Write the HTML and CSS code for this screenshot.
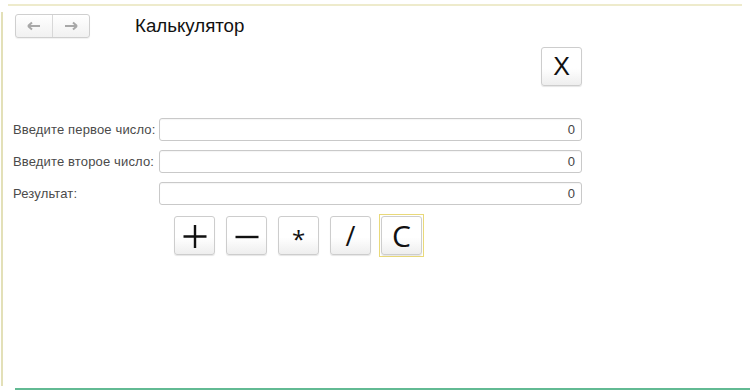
FILE: index.html
```html
<!DOCTYPE html>
<html lang="ru">
<head>
<meta charset="utf-8">
<title>Калькулятор</title>
<link rel="stylesheet" href="styles.css">
</head>
<body>
<div class="page">
  <div class="topline"></div>
  <div class="main">
    <div class="header">
      <div class="nav">
        <button class="nav-btn" type="button" aria-label="Назад">
          <svg width="14" height="10" viewBox="0 0 14 10"><path d="M1 5H13M1 5L5 1.5M1 5L5 8.5" stroke="#a8a8a8" stroke-width="2" fill="none"/></svg>
        </button>
        <button class="nav-btn" type="button" aria-label="Вперёд">
          <svg width="14" height="10" viewBox="0 0 14 10"><path d="M13 5H1M13 5L9 1.5M13 5L9 8.5" stroke="#a8a8a8" stroke-width="2" fill="none"/></svg>
        </button>
      </div>
      <div class="title">Калькулятор</div>
    </div>
    <div class="form">
      <div class="close-row">
        <button class="btn btn-close" type="button">X</button>
      </div>
      <div class="fields">
        <div class="field">
          <label class="label">Введите первое число:</label>
          <div class="input">0</div>
        </div>
        <div class="field">
          <label class="label">Введите второе число:</label>
          <div class="input">0</div>
        </div>
        <div class="field">
          <label class="label">Результат:</label>
          <div class="input">0</div>
        </div>
      </div>
      <div class="ops">
        <button class="btn op" type="button" aria-label="+">
          <svg width="26" height="26" viewBox="0 0 26 26"><path d="M13 2V25M1.5 13.5H24.5" stroke="#111" stroke-width="2.4"/></svg>
        </button>
        <button class="btn op" type="button" aria-label="−">
          <svg width="26" height="26" viewBox="0 0 26 26"><path d="M1.5 14H24.5" stroke="#111" stroke-width="2.4"/></svg>
        </button>
        <button class="btn op op-text op-star" type="button">*</button>
        <button class="btn op op-text" type="button">/</button>
        <div class="focus">
          <button class="btn op op-text op-c" type="button">C</button>
        </div>
      </div>
    </div>
  </div>
  <div class="bottomline"></div>
</div>
</body>
</html>
```

FILE: styles.css
```css
html, body {
  margin: 0;
  padding: 0;
  background: #ffffff;
}

.page {
  width: 750px;
  height: 390px;
  overflow: hidden;
  font-family: "Liberation Sans", Arial, sans-serif;
  color: #333;
}

.topline {
  height: 2px;
  margin: 4px 8px 0 8px;
  background: #eeebcc;
}

.main {
  margin-top: 6px;
  margin-left: 1px;
  height: 374px;
  border-left: 2px solid #e3e0b8;
  box-sizing: border-box;
}

.header {
  display: flex;
  align-items: center;
  padding: 2px 0 0 12px;
  height: 24px;
}

.nav {
  display: flex;
  width: 75px;
  height: 24px;
  border: 1px solid #cfcfcf;
  border-radius: 3px;
  box-sizing: border-box;
  background: linear-gradient(#ffffff, #f1f1f1);
  box-shadow: 0 1px 1px rgba(0,0,0,0.06);
}

.nav-btn {
  flex: 1;
  border: 0;
  background: transparent;
  padding: 0;
  display: flex;
  align-items: center;
  justify-content: center;
}

.nav-btn + .nav-btn {
  border-left: 1px solid #d8d8d8;
}

.title {
  margin-left: 45px;
  font-size: 18.7px;
  color: #111;
  line-height: 20px;
  margin-top: -1px;
}

.form {
  width: 569px;
  padding-left: 10px;
}

.close-row {
  display: flex;
  justify-content: flex-end;
  margin-top: 9px;
}

.btn {
  box-sizing: border-box;
  border: 1px solid #cdcdcd;
  border-radius: 3px;
  background: linear-gradient(#ffffff 0%, #ffffff 55%, #eeeeee 100%);
  box-shadow: 0 1px 1px rgba(0,0,0,0.10);
  padding: 0;
  display: flex;
  align-items: center;
  justify-content: center;
  color: #111;
}

.btn-close {
  width: 41px;
  height: 39px;
  font-family: "Liberation Sans", Arial, sans-serif;
  font-size: 25px;
  line-height: 1;
}

.fields {
  display: flex;
  flex-direction: column;
  gap: 9px;
  margin-top: 32px;
}

.field {
  display: flex;
  align-items: center;
  height: 23px;
}

.label {
  width: 146px;
  flex: none;
  font-size: 13px;
  letter-spacing: 0.15px;
  color: #4a4a4a;
  white-space: nowrap;
}

.input {
  flex: 1;
  height: 23px;
  box-sizing: border-box;
  border: 1px solid #c9c9c9;
  border-radius: 3px;
  background: #fff;
  font-size: 13px;
  color: #444;
  text-align: right;
  padding: 0 6px;
  line-height: 21px;
  box-shadow: inset 0 1px 1px rgba(0,0,0,0.04);
}

.ops {
  display: flex;
  align-items: center;
  gap: 11px;
  margin-top: 9px;
  padding-left: 161px;
}

.op {
  width: 41px;
  height: 39px;
}

.op-text {
  font-family: "Open Sans", "DejaVu Sans", sans-serif;
  font-size: 27px;
  line-height: 1;
  font-weight: 400;
}

.op-star {
  font-size: 24px;
  padding-top: 6px;
}

.op-c {
  font-size: 30px;
}

.focus {
  border: 1px solid #e9d97a;
  padding: 1px;
  margin-left: -3px;
  display: flex;
}

.bottomline {
  height: 2px;
  margin-left: 15px;
  margin-top: 2px;
  background: #62ba93;
}
```
